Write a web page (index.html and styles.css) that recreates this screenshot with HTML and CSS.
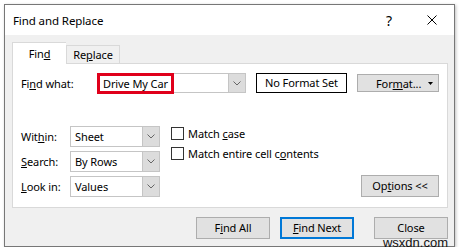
FILE: index.html
```html
<!DOCTYPE html>
<html lang="en">
<head>
    <meta charset="UTF-8">
    <title>Find and Replace</title>
    <link rel="stylesheet" href="styles.css">
</head>
<body>
    <div class="dialog">
        <div class="titlebar">
            <span class="title">Find and Replace</span>
            <span class="help">?</span>
            <svg class="close-x" width="10" height="10" viewBox="0 0 10 10">
                <path d="M0.5 0.5 L9.5 9.5 M9.5 0.5 L0.5 9.5" stroke="#000" stroke-width="1" fill="none"/>
            </svg>
        </div>

        <div class="content">
            <div class="tabs">
                <div class="tab active">Fin<u>d</u></div>
                <div class="tab">Re<u>p</u>lace</div>
            </div>

            <div class="panel">
                <div class="find-row">
                    <label class="label-wide">Fi<u>n</u>d what:</label>
                    <div class="combo combo-find">
                        <span class="combo-text">Drive My Car</span>
                        <span class="combo-btn">
                            <svg width="8" height="5" viewBox="0 0 8 5"><path d="M0.5 0.5 L4 4 L7.5 0.5" stroke="#666" fill="none"/></svg>
                        </span>
                        <span class="highlight"></span>
                    </div>
                    <div class="no-format">No Format Set</div>
                    <div class="button format-btn">
                        <span>For<u>m</u>at...</span>
                        <svg class="caret" width="5" height="3" viewBox="0 0 5 3"><path d="M0 0 L5 0 L2.5 3 Z" fill="#000"/></svg>
                    </div>
                </div>

                <div class="lower">
                    <div class="selects">
                        <div class="select-row">
                            <label class="label-narrow">Wit<u>h</u>in:</label>
                            <div class="combo combo-small">
                                <span class="combo-text">Sheet</span>
                                <span class="combo-btn"><svg width="8" height="5" viewBox="0 0 8 5"><path d="M0.5 0.5 L4 4 L7.5 0.5" stroke="#666" fill="none"/></svg></span>
                            </div>
                        </div>
                        <div class="select-row">
                            <label class="label-narrow"><u>S</u>earch:</label>
                            <div class="combo combo-small">
                                <span class="combo-text">By Rows</span>
                                <span class="combo-btn"><svg width="8" height="5" viewBox="0 0 8 5"><path d="M0.5 0.5 L4 4 L7.5 0.5" stroke="#666" fill="none"/></svg></span>
                            </div>
                        </div>
                        <div class="select-row">
                            <label class="label-narrow"><u>L</u>ook in:</label>
                            <div class="combo combo-small">
                                <span class="combo-text">Values</span>
                                <span class="combo-btn"><svg width="8" height="5" viewBox="0 0 8 5"><path d="M0.5 0.5 L4 4 L7.5 0.5" stroke="#666" fill="none"/></svg></span>
                            </div>
                        </div>
                    </div>

                    <div class="checks">
                        <div class="check-row"><span class="checkbox"></span><span>Match <u>c</u>ase</span></div>
                        <div class="check-row"><span class="checkbox"></span><span>Match entire cell c<u>o</u>ntents</span></div>
                    </div>

                    <div class="button options-btn">Op<u>t</u>ions &lt;&lt;</div>
                </div>
            </div>

            <div class="actions">
                <div class="button action-btn">F<u>i</u>nd All</div>
                <div class="button action-btn default"><u>F</u>ind Next</div>
                <div class="button action-btn close-btn">Close</div>
            </div>
        </div>
        <span class="watermark">wsxdn.com</span>
    </div>
</body>
</html>
```

FILE: styles.css
```css
body {
    margin: 0;
    padding: 4px 0 0 4px;
    background-color: #fff;
    font-family: "Noto Sans", "Open Sans", sans-serif;
    font-size: 11px;
    letter-spacing: -0.1px;
    color: #000;
}
u {
    text-decoration-thickness: 1px;
    text-underline-offset: 1px;
}
.dialog {
    position: relative;
    box-sizing: border-box;
    width: 451px;
    height: 243px;
    border: 1px solid #777;
    background-color: #f0f0f0;
    box-shadow: 1px 1px 3px rgba(0, 0, 0, 0.25);
}
.titlebar {
    display: flex;
    align-items: center;
    height: 30px;
    padding-left: 8px;
    background-color: #fff;
}
.title {
    flex: 1;
    font-size: 11.5px;
}
.help {
    font-size: 14px;
    margin-right: 35px;
}
.close-x {
    margin-right: 17px;
}
.content {
    padding: 7px 6px 0 7px;
}
.tabs {
    display: flex;
    align-items: flex-end;
    height: 21px;
}
.tab {
    box-sizing: border-box;
    width: 54px;
    height: 18px;
    border: 1px solid #d9d9d9;
    border-bottom: none;
    background-color: #f0f0f0;
    text-align: center;
    line-height: 18px;
}
.tab.active {
    height: 22px;
    margin-bottom: -1px;
    background-color: #fff;
    border-right: none;
    line-height: 22px;
    position: relative;
    z-index: 1;
}
.panel {
    box-sizing: border-box;
    height: 145px;
    border: 1px solid #d9d9d9;
    background-color: #fff;
    padding: 9px 8px 0 8px;
}
.find-row {
    display: flex;
    align-items: center;
    height: 20px;
}
.label-wide {
    width: 76px;
}
.label-narrow {
    width: 49px;
}
.combo {
    position: relative;
    box-sizing: border-box;
    display: flex;
    align-items: center;
    border: 1px solid #c5c5c5;
    background-color: #fff;
}
.combo-find {
    width: 149px;
    height: 20px;
}
.combo-small {
    width: 90px;
    height: 21px;
}
.combo-text {
    flex: 1;
    padding-left: 4px;
}
.combo-find .combo-text {
    padding-left: 5px;
}
.combo-btn {
    display: flex;
    align-items: center;
    justify-content: center;
    align-self: stretch;
    width: 16px;
    background-color: #dcdcdc;
    border-left: 1px solid #c5c5c5;
}
.highlight {
    position: absolute;
    left: -1px;
    top: -1px;
    width: 77px;
    height: 21px;
    box-sizing: border-box;
    border: 3px solid #e0001b;
}
.no-format {
    box-sizing: border-box;
    width: 91px;
    height: 20px;
    margin-left: 10px;
    border: 1px solid #000;
    text-align: center;
    line-height: 18px;
}
.button {
    box-sizing: border-box;
    border: 1px solid #adadad;
    background-color: #e1e1e1;
    text-align: center;
}
.format-btn {
    display: flex;
    align-items: center;
    width: 82px;
    height: 18px;
    margin-left: 10px;
    padding-left: 18px;
    padding-right: 5px;
}
.format-btn span {
    flex: 1;
    text-align: left;
}
.lower {
    display: flex;
    margin-top: 33px;
}
.selects {
    display: flex;
    flex-direction: column;
    gap: 4px;
}
.select-row {
    display: flex;
    align-items: center;
}
.checks {
    margin-left: 11px;
    padding-top: 1px;
}
.check-row {
    display: flex;
    align-items: center;
    height: 13px;
    margin-bottom: 7px;
}
.checkbox {
    box-sizing: border-box;
    width: 13px;
    height: 13px;
    border: 1px solid #333;
    margin-right: 4px;
}
.options-btn {
    align-self: flex-end;
    margin-left: auto;
    width: 78px;
    height: 22px;
    line-height: 20px;
}
.actions {
    display: flex;
    justify-content: flex-end;
    margin-top: 9px;
}
.action-btn {
    width: 74px;
    height: 22px;
    line-height: 20px;
    margin-left: 10px;
}
.action-btn.default {
    border: 2px solid #0078d7;
    line-height: 18px;
}
.action-btn.close-btn {
    margin-left: 20px;
}
.watermark {
    position: absolute;
    right: 6px;
    bottom: -3px;
    font-family: "Liberation Sans", Arial, sans-serif;
    font-size: 13px;
    line-height: 13px;
    letter-spacing: 0;
    color: #111;
}
```
